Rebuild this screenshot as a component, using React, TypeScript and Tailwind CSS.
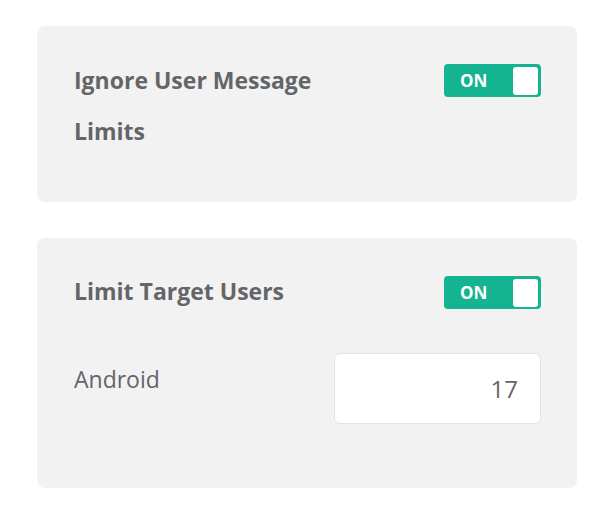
function Toggle() {
  return (
    <div className="flex h-[33px] w-[97px] shrink-0 items-center justify-between rounded-[4px] bg-[#14b392] pl-[16px] pr-[3px]">
      <span className="text-[17px] font-bold leading-none text-white">ON</span>
      <span className="h-[28px] w-[25px] rounded-[3px] bg-white" />
    </div>
  );
}

export default function App() {
  return (
    <div className="min-h-[520px] w-[616px] bg-white px-[37px] pt-[26px] font-['Open_Sans',sans-serif] text-[#636569]">
      <div className="flex w-[540px] items-start justify-between rounded-[8px] bg-[#f2f2f2] pb-[45px] pl-[37px] pr-[36px] pt-[29px]">
        <h2 className="w-[260px] text-[23px] font-bold leading-[51px]">Ignore User Message Limits</h2>
        <div className="mt-[9px]">
          <Toggle />
        </div>
      </div>

      <div className="mt-[36px] w-[540px] rounded-[8px] bg-[#f2f2f2] pb-[64px] pl-[37px] pr-[36px] pt-[28px]">
        <div className="flex items-start justify-between">
          <h2 className="text-[23px] font-bold leading-[51px]">Limit Target Users</h2>
          <div className="mt-[10px]">
            <Toggle />
          </div>
        </div>
        <div className="mt-[36px] flex items-start justify-between">
          <label className="mt-[11px] text-[23px] leading-[30px]">Android</label>
          <div className="flex h-[71px] w-[207px] items-center justify-end rounded-[6px] border border-[#e4e4e4] bg-white pr-[22px] text-[24px]">
            17
          </div>
        </div>
      </div>
    </div>
  );
}
